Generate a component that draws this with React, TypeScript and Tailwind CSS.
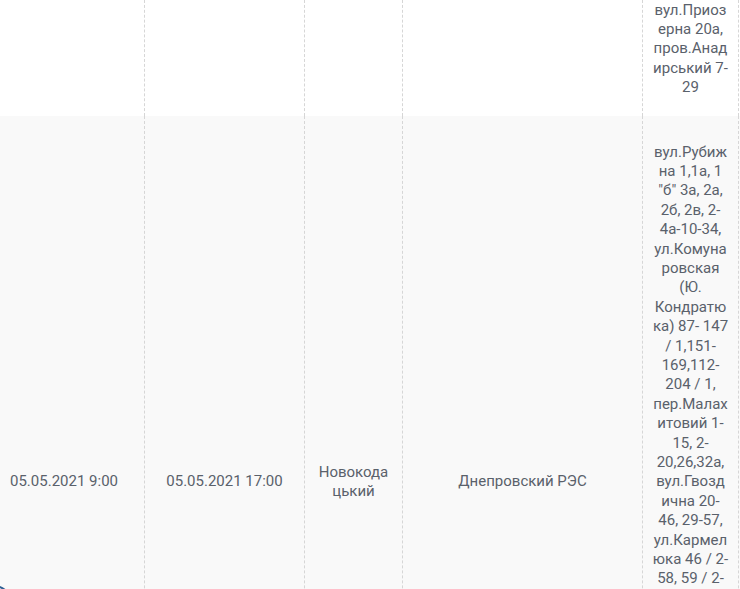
import React from 'react'

const topLines = ['вул.Приоз', 'ерна 20а,', 'пров.Анад', 'ирський 7-', '29']

const addrLines = [
  'вул.Рубиж',
  'на 1,1а, 1',
  '"б" 3а, 2а,',
  '2б, 2в, 2-',
  '4а-10-34,',
  'ул.Комуна',
  'ровская',
  '(Ю.',
  'Кондратю',
  'ка) 87- 147',
  '/ 1,151-',
  '169,112-',
  '204 / 1,',
  'пер.Малах',
  'итовий 1-',
  '15, 2-',
  '20,26,32а,',
  'вул.Гвозд',
  'ична 20-',
  '46, 29-57,',
  'ул.Кармел',
  'юка 46 / 2-',
  '58, 59 / 2-',
  '64,',
  'пров.Кармел',
  'юка 1-7, 2-',
  '10,',
  'вул.Гонча',
  'рова 3-15,',
  '4-22,',
  'пров.Лісн',
  'ий 1-9, 2-',
  '14, вул.Сад',
  'ова 1-25, 2-',
  '30',
]

const cell = 'flex items-center justify-center text-center border-r border-dashed border-[#d6d6d6] px-2'

export default function App() {
  return (
    <div
      className="relative h-[589px] w-[740px] overflow-hidden bg-white text-[15px] leading-[19.4px] text-[#5a616b]"
      style={{ fontFamily: 'Roboto, "Noto Sans", Arial, sans-serif' }}
    >
      <div className="-ml-4 w-[955px]">
        {/* first row, scrolled so only its tail shows */}
        <div className="grid h-[116px] grid-cols-[161px_160px_98px_240px_96px_200px] bg-white">
          <div className={cell} />
          <div className={cell} />
          <div className={cell} />
          <div className={cell} />
          <div className="flex flex-col items-center border-r border-dashed border-[#d6d6d6] pt-[0.5px] text-center">
            {topLines.map((l, i) => (
              <div key={i} className="whitespace-nowrap">{l}</div>
            ))}
          </div>
          <div />
        </div>

        <div className="grid grid-cols-[161px_160px_98px_240px_96px_200px] bg-[#f9f9f9]">
          <div className={cell}>05.05.2021 9:00</div>
          <div className={cell}>05.05.2021 17:00</div>
          <div className={cell}>
            <div>
              Новокода
              <br />
              цький
            </div>
          </div>
          <div className={cell}>Днепровский РЭС</div>
          <div className="flex flex-col items-center border-r border-dashed border-[#d6d6d6] py-[26.5px] text-center">
            {addrLines.map((l, i) => (
              <div key={i} className="whitespace-nowrap">{l}</div>
            ))}
          </div>
          <div />
        </div>
      </div>

      {/* floating round button, mostly off-screen */}
      <div className="absolute left-[-36px] top-[584px] h-[52px] w-[52px] rounded-full border-2 border-[#2e5f93] bg-[#dce8f4]" />
    </div>
  )
}
